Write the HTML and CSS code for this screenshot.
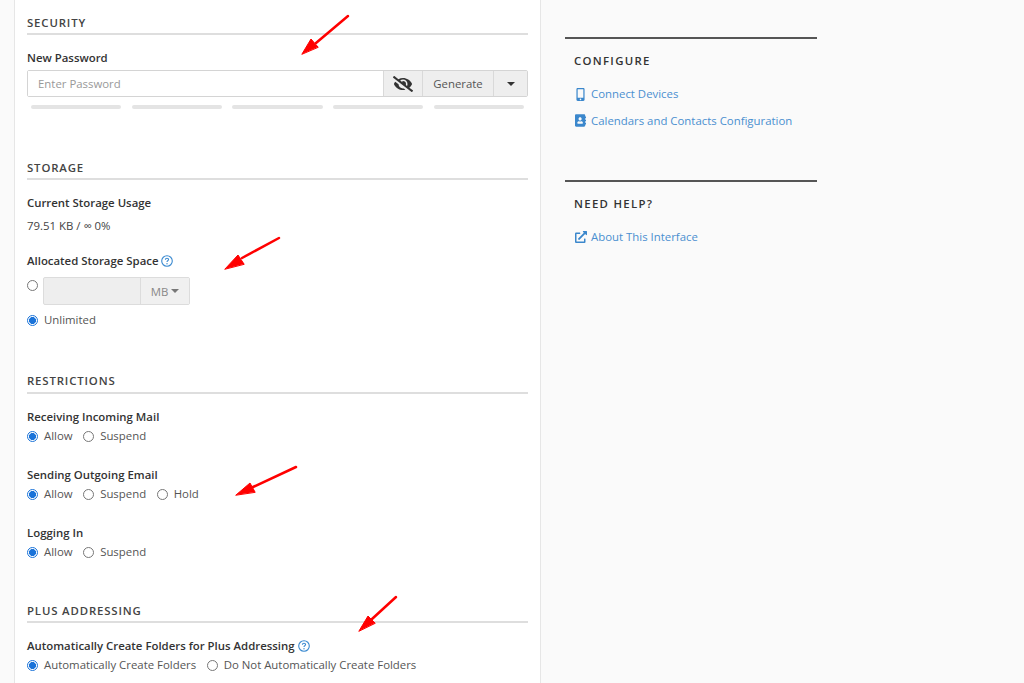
FILE: index.html
```html
<!DOCTYPE html>
<html lang="en">
<head>
<meta charset="utf-8">
<title>Manage Email Account</title>
<link rel="stylesheet" href="styles.css">
</head>
<body>
<div class="page">
  <main class="panel">
    <section class="sec sec-security">
      <h2 class="sec-title">SECURITY</h2>
      <div class="field-label first">New Password</div>
      <div class="pw-group">
        <input class="pw-input" type="text" placeholder="Enter Password">
        <span class="addon addon-eye">
          <svg width="20" height="16" viewBox="0 0 640 512"><path fill="#333" d="M320 400c-75.850 0-137.250-58.710-142.900-133.110L72.200 185.820c-13.790 17.300-26.480 35.590-36.720 55.590a32.350 32.350 0 0 0 0 29.190C89.710 376.410 197.070 448 320 448c26.910 0 52.870-4 77.890-10.460L346 397.390a144.130 144.130 0 0 1-26 2.610zm313.820 58.100l-110.550-85.440a331.250 331.250 0 0 0 81.250-102.070 32.350 32.350 0 0 0 0-29.190C550.290 135.590 442.930 64 320 64a308.150 308.150 0 0 0-147.320 37.700L45.460 3.370A16 16 0 0 0 23 6.180L3.370 31.450A16 16 0 0 0 6.180 53.900l588.360 454.730a16 16 0 0 0 22.460-2.810l19.640-25.270a16 16 0 0 0-2.820-22.450zm-183.720-142l-39.300-30.380A94.750 94.750 0 0 0 416 256a94.760 94.760 0 0 0-121.310-92.210A47.650 47.650 0 0 1 304 192a46.640 46.640 0 0 1-1.540 10l-73.610-56.890A142.310 142.310 0 0 1 320 112a143.920 143.920 0 0 1 144 144c0 21.630-5.290 41.790-13.900 60.110z"/></svg>
        </span>
        <span class="addon addon-gen">Generate</span>
        <span class="addon addon-caret"><i class="caret dark"></i></span>
      </div>
      <div class="strength"><i></i><i></i><i></i><i></i><i></i></div>
    </section>

    <section class="sec sec-storage">
      <h2 class="sec-title">STORAGE</h2>
      <div class="field-label first">Current Storage Usage</div>
      <div class="usage">79.51 KB / ∞ 0%</div>
      <div class="field-label alloc">Allocated Storage Space <svg class="help" width="12" height="12" viewBox="0 0 12 12"><circle cx="6" cy="6" r="5.300" fill="none" stroke="#3b8ad0" stroke-width="1.100"/><path d="M4.400 4.700c0-1 .7-1.500 1.600-1.500s1.600.5 1.600 1.400c0 1.200-1.600 1.200-1.600 2.300" fill="none" stroke="#3b8ad0" stroke-width="1.100"/><circle cx="6" cy="8.700" r=".7" fill="#3b8ad0"/></svg></div>
      <div class="quota-row">
        <span class="radio quota-radio"></span>
        <div class="quota-group"><span class="quota-input"></span><span class="quota-unit">MB <i class="caret grey"></i></span></div>
      </div>
      <label class="opt unlimited"><span class="radio on"></span>Unlimited</label>
    </section>

    <section class="sec sec-restrict">
      <h2 class="sec-title">RESTRICTIONS</h2>
      <div class="field-label first">Receiving Incoming Mail</div>
      <div class="opts"><label class="opt"><span class="radio on"></span>Allow</label><label class="opt"><span class="radio"></span>Suspend</label></div>
      <div class="field-label next">Sending Outgoing Email</div>
      <div class="opts"><label class="opt"><span class="radio on"></span>Allow</label><label class="opt"><span class="radio"></span>Suspend</label><label class="opt"><span class="radio"></span>Hold</label></div>
      <div class="field-label next">Logging In</div>
      <div class="opts"><label class="opt"><span class="radio on"></span>Allow</label><label class="opt"><span class="radio"></span>Suspend</label></div>
    </section>

    <section class="sec sec-plus">
      <h2 class="sec-title">PLUS ADDRESSING</h2>
      <div class="field-label first">Automatically Create Folders for Plus Addressing <svg class="help" width="12" height="12" viewBox="0 0 12 12"><circle cx="6" cy="6" r="5.300" fill="none" stroke="#3b8ad0" stroke-width="1.100"/><path d="M4.400 4.700c0-1 .7-1.500 1.600-1.500s1.600.5 1.600 1.400c0 1.200-1.600 1.200-1.600 2.300" fill="none" stroke="#3b8ad0" stroke-width="1.100"/><circle cx="6" cy="8.700" r=".7" fill="#3b8ad0"/></svg></div>
      <div class="opts"><label class="opt"><span class="radio on"></span>Automatically Create Folders</label><label class="opt"><span class="radio"></span>Do Not Automatically Create Folders</label></div>
    </section>
  </main>

  <aside class="side">
    <div class="side-box">
      <h3 class="side-title">CONFIGURE</h3>
      <a class="side-link"><svg width="9" height="13" viewBox="0 0 320 512"><path fill="#3b87cc" d="M272 0H48C21.500 0 0 21.500 0 48v416c0 26.500 21.500 48 48 48h224c26.500 0 48-21.500 48-48V48c0-26.500-21.500-48-48-48zM160 480c-17.700 0-32-14.300-32-32s14.300-32 32-32 32 14.300 32 32-14.300 32-32 32zm112-108c0 6.600-5.400 12-12 12H60c-6.600 0-12-5.400-12-12V60c0-6.600 5.400-12 12-12h200c6.600 0 12 5.400 12 12v312z"/></svg>Connect Devices</a>
      <a class="side-link"><svg width="11" height="13" viewBox="0 0 448 512"><path fill="#3b87cc" d="M436 160c6.600 0 12-5.400 12-12v-40c0-6.600-5.400-12-12-12h-20V48c0-26.500-21.500-48-48-48H48C21.500 0 0 21.500 0 48v416c0 26.500 21.500 48 48 48h320c26.500 0 48-21.500 48-48v-48h20c6.600 0 12-5.400 12-12v-40c0-6.600-5.400-12-12-12h-20v-64h20c6.600 0 12-5.400 12-12v-40c0-6.600-5.400-12-12-12h-20v-64h20zm-228-32c35.300 0 64 28.700 64 64s-28.700 64-64 64-64-28.700-64-64 28.700-64 64-64zm112 236.800c0 10.600-10 19.200-22.400 19.200H118.400C106 384 96 375.400 96 364.800v-19.200c0-31.800 30.100-57.600 67.200-57.600h5c12.300 5.100 25.700 8 39.800 8s27.600-2.900 39.800-8h5c37.100 0 67.200 25.800 67.200 57.600v19.200z"/></svg>Calendars and Contacts Configuration</a>
    </div>
    <div class="side-box help-box">
      <h3 class="side-title">NEED HELP?</h3>
      <a class="side-link"><svg width="12" height="12" viewBox="0 0 512 512"><path fill="#3b87cc" d="M432 320H400a16 16 0 0 0-16 16V448H64V128H208a16 16 0 0 0 16-16V80a16 16 0 0 0-16-16H48A48 48 0 0 0 0 112V464a48 48 0 0 0 48 48H400a48 48 0 0 0 48-48V336A16 16 0 0 0 432 320ZM488 0h-128c-21.370 0-32.050 25.910-17 41l35.730 35.730L135 320.370a24 24 0 0 0 0 34L157.670 377a24 24 0 0 0 34 0L435.280 133.320 471 169c15 15 41 4.500 41-17V24A24 24 0 0 0 488 0Z"/></svg>About This Interface</a>
    </div>
  </aside>

  <svg class="arrows" width="1024" height="683" viewBox="0 0 1024 683">
    <g fill="#f00" stroke="#f00" stroke-linecap="round">
      <path d="M348 16L316 43" stroke-width="2.500"/><path d="M302 54l9-15 7 8z" stroke-width="1"/>
      <path d="M279 238L242 258" stroke-width="2.500"/><path d="M225 269l13-14 6 9z" stroke-width="1"/>
      <path d="M296 467L253 487" stroke-width="2.500"/><path d="M236 495l14-12 5 9z" stroke-width="1"/>
      <path d="M396 597L372 619" stroke-width="2.500"/><path d="M359 631l9-15 7 7z" stroke-width="1"/>
    </g>
  </svg>
</div>
</body>
</html>
```

FILE: styles.css
```css
* { box-sizing: border-box; }
html, body { margin: 0; height: 683px; overflow: hidden; }
body {
  background: #fafafa;
  font-family: "Open Sans", "Liberation Sans", sans-serif;
  font-size: 11.4px;
  color: #333;
}
.page { position: relative; display: flex; align-items: flex-start; height: 683px; padding-left: 14px; }
.panel {
  width: 527px;
  height: 683px;
  background: #fff;
  border-left: 1px solid #e6e6e6;
  border-right: 1px solid #e6e6e6;
  padding: 0 12px;
  flex: none;
}
.sec-title {
  margin: 0;
  height: 20px;
  border-bottom: 2px solid #dedede;
  font-size: 11.4px;
  line-height: 16px;
  font-weight: 600;
  letter-spacing: .85px;
  color: #444;
}
.sec-restrict .sec-title { height: 21px; }
.sec-security { padding-top: 15px; }
.sec-storage { padding-top: 51px; }
.sec-restrict { padding-top: 45px; }
.sec-plus { padding-top: 43px; }
.field-label { font-weight: 600; line-height: 16px; color: #333; height: 16px; display: flex; align-items: center; gap: 3px; }
.field-label.first { margin-top: 15px; }
.field-label.next { margin-top: 23px; }
.field-label.alloc { margin-top: 19px; }
.help { flex: none; }

.pw-group { display: flex; height: 27px; margin-top: 4px; width: 501px; border: 1px solid #d4d4d4; border-radius: 2px; }
.pw-input { flex: 1; min-width: 0; border: 0; padding: 0 10px; font: inherit; background: #fff; outline: 0; }
.pw-input::placeholder { color: #999; opacity: 1; }
.addon { display: flex; align-items: center; justify-content: center; background: #eee; border-left: 1px solid #d9d9d9; color: #555; flex: none; }
.addon-eye { width: 39px; }
.addon-gen { width: 71px; }
.addon-caret { width: 34px; }
.caret { display: inline-block; width: 0; height: 0; border-left: 4px solid transparent; border-right: 4px solid transparent; border-top: 4px solid #333; }
.caret.grey { border-top-color: #777; }

.strength { display: flex; gap: 10.300px; padding: 0 4px; margin-top: 8px; }
.strength i { flex: 1; height: 4px; background: #e4e4e4; border-radius: 2px; }

.usage { margin-top: 7px; line-height: 16px; color: #444; }

.quota-row { display: flex; gap: 5px; margin-top: 8px; align-items: flex-start; }
.quota-radio { margin-top: 3px; }
.quota-group { display: flex; width: 147px; height: 28px; border: 1px solid #dcdcdc; border-radius: 2px; background: #eee; }
.quota-input { flex: 1; }
.quota-unit { width: 49px; display: flex; align-items: center; justify-content: center; gap: 3px; border-left: 1px solid #dcdcdc; color: #888; background: #f0f0f0; }

.opts { display: flex; gap: 10.500px; margin-top: 3px; }
.opt { display: flex; align-items: center; gap: 6px; line-height: 16px; height: 16px; color: #555; }
.unlimited { margin-top: 7px; }
.radio { width: 11px; height: 11px; border: 1px solid #777; border-radius: 50%; background: #fff; display: inline-block; flex: none; }
.radio.on { border: 1px solid #1a73d9; background: radial-gradient(circle, #1a73d9 0 3.200px, #fff 3.800px); }

.side { width: 252px; margin-left: 24px; flex: none; padding-top: 37px; }
.side-box { border-top: 2px solid #555; padding: 0 9px; height: 143px; }
.side-title { margin: 14px 0 17px; font-size: 11.4px; line-height: 16px; font-weight: 600; letter-spacing: 1.3px; color: #333; }
.side-link { display: flex; align-items: center; gap: 0; height: 16px; margin-bottom: 10.500px; color: #4a8fd0; line-height: 16px; }
.side-link svg { flex: none; margin-left: 2px; margin-right: 6px; }
.side-link svg[width="11"] { margin-left: 1px; margin-right: 5px; }
.side-link svg[width="12"] { margin-left: 1px; margin-right: 4px; }

.arrows { position: absolute; left: 0; top: 0; pointer-events: none; }
```
